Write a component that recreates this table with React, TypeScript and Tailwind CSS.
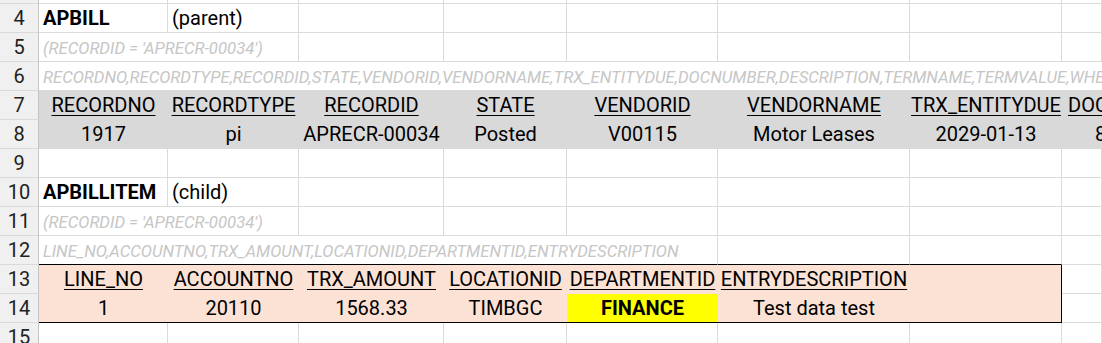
import React from 'react';

const W = ['w-[129px]', 'w-[131px]', 'w-[145px]', 'w-[123px]', 'w-[151px]', 'w-[192px]', 'w-[152px]'];

const GRID = 'border-[#dadada]';

function RowHead({ n, h = 'h-[29px]' }: { n?: number; h?: string }) {
  return (
    <div
      className={`${h} w-[39px] shrink-0 bg-[#f0f0f0] border-r border-r-[#c4c4c4] border-b ${GRID} text-center text-[#222] overflow-hidden`}
    >
      {n}
    </div>
  );
}

function Cell({
  w,
  children,
  className = '',
}: {
  w: string;
  children?: React.ReactNode;
  className?: string;
}) {
  return (
    <div className={`${w} shrink-0 h-full border-r border-b ${GRID} whitespace-nowrap overflow-visible ${className}`}>
      {children}
    </div>
  );
}

function Row({ n, children }: { n: number; children: React.ReactNode }) {
  return (
    <div className="flex h-[29px] leading-[28px]">
      <RowHead n={n} />
      <div className="flex flex-1 min-w-0">{children}</div>
    </div>
  );
}

function Blank({ from = 0 }: { from?: number }) {
  return (
    <>
      {W.slice(from).map((w) => (
        <Cell key={w} w={w} />
      ))}
      <Cell w="flex-1" />
    </>
  );
}

// grey italic helper lines (filters / field lists)
const hint = 'pl-[4px] pt-[2px] italic text-[16.7px] text-[#c6c6c6]';

const parentHead = ['RECORDNO', 'RECORDTYPE', 'RECORDID', 'STATE', 'VENDORID', 'VENDORNAME', 'TRX_ENTITYDUE', 'DOCNUMBER'];
const parentVals = ['1917', 'pi', 'APRECR-00034', 'Posted', 'V00115', 'Motor Leases', '2029-01-13', '8'];

const childHead = ['LINE_NO', 'ACCOUNTNO', 'TRX_AMOUNT', 'LOCATIONID', 'DEPARTMENTID', 'ENTRYDESCRIPTION'];
const childVals = ['1', '20110', '1568.33', 'TIMBGC', 'FINANCE', 'Test data test'];

export default function App() {
  return (
    <div
      className="w-[1102px] h-[343px] overflow-hidden bg-white text-black text-[20px]"
      style={{ fontFamily: 'Roboto, "Liberation Sans", sans-serif' }}
    >
      {/* row 3, cut off */}
      <div className="flex h-[4px]">
        <RowHead h="h-[4px]" />
        <div className="flex flex-1">
          <Blank />
        </div>
      </div>

      <Row n={4}>
        <Cell w={W[0]} className="pl-[4px] font-bold">APBILL</Cell>
        <Cell w={W[1]} className="pl-[4px]">(parent)</Cell>
        <Blank from={2} />
      </Row>

      <Row n={5}>
        <Cell w="w-[260px]" className={hint}>(RECORDID = 'APRECR-00034')</Cell>
        <Blank from={2} />
      </Row>

      <Row n={6}>
        <Cell w="flex-1" className={`${hint} overflow-hidden border-b-[#d9d9d9]`}>
          RECORDNO,RECORDTYPE,RECORDID,STATE,VENDORID,VENDORNAME,TRX_ENTITYDUE,DOCNUMBER,DESCRIPTION,TERMNAME,TERMVALUE,WHENCREATED,WHENDUE
        </Cell>
      </Row>

      <Row n={7}>
        {parentHead.map((t, i) => (
          <div
            key={t}
            className={`${W[i] ?? 'flex-1'} shrink-0 h-full bg-[#d9d9d9] whitespace-nowrap ${i < 7 ? 'text-center' : 'pl-[6px] overflow-hidden'}`}
          >
            <span className="underline decoration-1 underline-offset-[3px]">{t}</span>
          </div>
        ))}
      </Row>

      <Row n={8}>
        {parentVals.map((t, i) => (
          <div
            key={i}
            className={`${W[i] ?? 'flex-1'} shrink-0 h-full bg-[#d9d9d9] border-b border-[#d9d9d9] whitespace-nowrap ${i < 7 ? 'text-center' : 'pl-[33px] overflow-hidden'}`}
          >
            {t}
          </div>
        ))}
      </Row>

      <Row n={9}>
        <Blank />
      </Row>

      <Row n={10}>
        <Cell w={W[0]} className="pl-[4px] font-bold">APBILLITEM</Cell>
        <Cell w={W[1]} className="pl-[4px]">(child)</Cell>
        <Blank from={2} />
      </Row>

      <Row n={11}>
        <Cell w="w-[260px]" className={hint}>(RECORDID = 'APRECR-00034')</Cell>
        <Blank from={2} />
      </Row>

      <Row n={12}>
        <Cell w="w-[679px]" className={`${hint} border-b-black`}>
          LINE_NO,ACCOUNTNO,TRX_AMOUNT,LOCATIONID,DEPARTMENTID,ENTRYDESCRIPTION
        </Cell>
        <Cell w={W[5]} className="border-b-black" />
        <Cell w={W[6]} className="border-b-black" />
        <Cell w="flex-1" />
      </Row>

      <Row n={13}>
        {childHead.map((t, i) => (
          <div key={t} className={`${W[i]} shrink-0 h-full bg-[#fbe2d5] text-center whitespace-nowrap`}>
            <span className="underline decoration-1 underline-offset-[3px]">{t}</span>
          </div>
        ))}
        <div className={`${W[6]} shrink-0 h-full bg-[#fbe2d5] border-r border-black`} />
        <Cell w="flex-1" />
      </Row>

      <Row n={14}>
        {childVals.map((t, i) => (
          <div
            key={i}
            className={`${W[i]} shrink-0 h-full border-b border-black text-center whitespace-nowrap ${
              i === 4 ? 'bg-[#ffff00] font-bold' : 'bg-[#fbe2d5]'
            }`}
          >
            {t}
          </div>
        ))}
        <div className={`${W[6]} shrink-0 h-full bg-[#fbe2d5] border-r border-b border-black`} />
        <Cell w="flex-1" />
      </Row>

      <Row n={15}>
        <Blank />
      </Row>
    </div>
  );
}
